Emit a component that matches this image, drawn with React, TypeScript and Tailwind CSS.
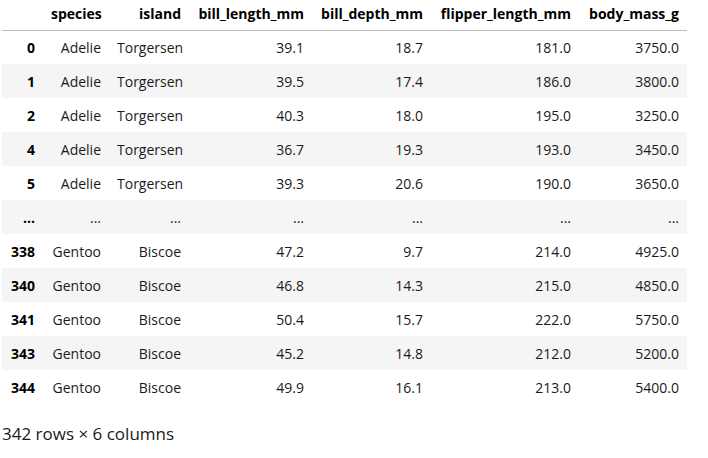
const columns = ["species", "island", "bill_length_mm", "bill_depth_mm", "flipper_length_mm", "body_mass_g"];

const rows: string[][] = [
  ["0", "Adelie", "Torgersen", "39.1", "18.7", "181.0", "3750.0"],
  ["1", "Adelie", "Torgersen", "39.5", "17.4", "186.0", "3800.0"],
  ["2", "Adelie", "Torgersen", "40.3", "18.0", "195.0", "3250.0"],
  ["4", "Adelie", "Torgersen", "36.7", "19.3", "193.0", "3450.0"],
  ["5", "Adelie", "Torgersen", "39.3", "20.6", "190.0", "3650.0"],
  ["...", "...", "...", "...", "...", "...", "..."],
  ["338", "Gentoo", "Biscoe", "47.2", "9.7", "214.0", "4925.0"],
  ["340", "Gentoo", "Biscoe", "46.8", "14.3", "215.0", "4850.0"],
  ["341", "Gentoo", "Biscoe", "50.4", "15.7", "222.0", "5750.0"],
  ["343", "Gentoo", "Biscoe", "45.2", "14.8", "212.0", "5200.0"],
  ["344", "Gentoo", "Biscoe", "49.9", "16.1", "213.0", "5400.0"],
];

export default function App() {
  return (
    <div className="bg-white w-[708px] h-[458px] pl-[2px] text-[#1a1a1a] font-['Open_Sans',sans-serif]">
      <table className="w-[685px] table-fixed border-collapse text-[14px] text-right">
        <colgroup>
          <col className="w-[41px]" />
          <col className="w-[66px]" />
          <col className="w-[80px]" />
          <col className="w-[123px]" />
          <col className="w-[119px]" />
          <col className="w-[148px]" />
          <col className="w-[108px]" />
        </colgroup>
        <thead>
          <tr className="h-[30px] border-b border-[#bdbdbd]">
            <th className="px-2" />
            {columns.map((c) => (
              <th key={c} className="px-2 font-bold text-black whitespace-nowrap align-middle pb-[2px]">
                {c}
              </th>
            ))}
          </tr>
        </thead>
        <tbody>
          {rows.map((r, i) => (
            <tr key={i} className={i % 2 === 1 ? "h-[34px] bg-[#f5f5f5]" : "h-[34px]"}>
              {r.map((v, j) => (
                <td key={j} className={j === 0 ? "px-2 font-bold text-black" : "px-2 whitespace-nowrap"}>
                  {v}
                </td>
              ))}
            </tr>
          ))}
        </tbody>
      </table>
      <div className="mt-[18px] text-[17px] leading-[24px]">342 rows × 6 columns</div>
    </div>
  );
}
